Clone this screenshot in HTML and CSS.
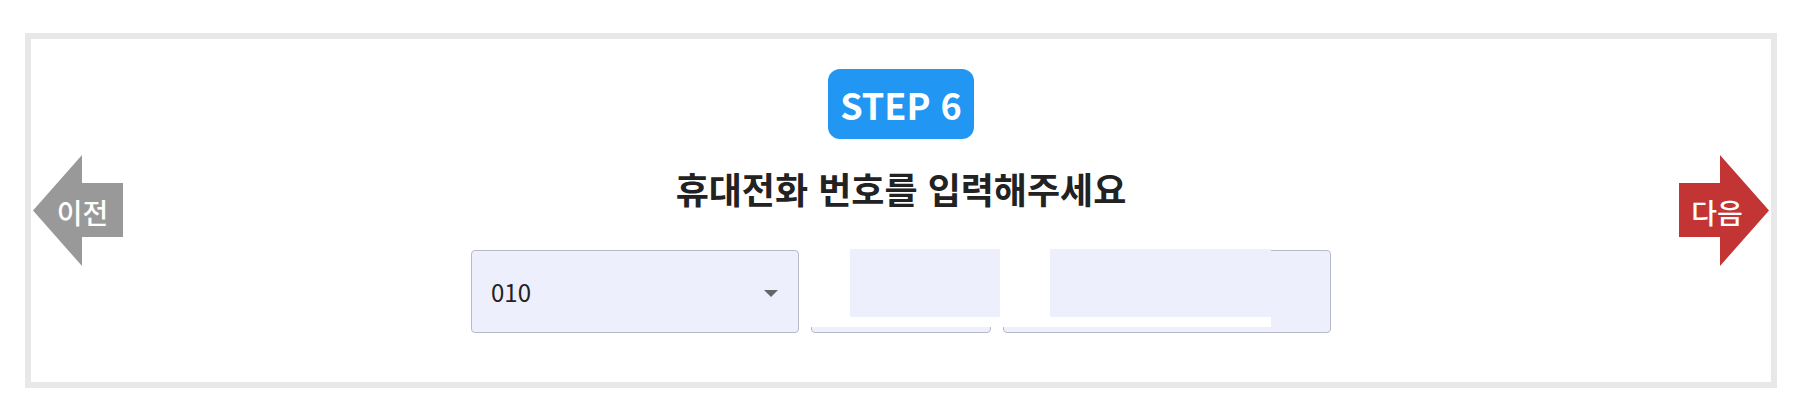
FILE: index.html
```html
<!DOCTYPE html>
<html lang="ko">
<head>
<meta charset="utf-8">
<title>STEP 6</title>
<link rel="stylesheet" href="styles.css">
</head>
<body>
<div class="frame">
  <a class="nav nav-prev">
    <svg class="nav-shape" width="90" height="111" viewBox="0 0 90 111"><polygon points="0,55.5 49,0 49,28 90,28 90,82 49,82 49,111" fill="#999999"/></svg>
    <span class="nav-label">이전</span>
  </a>
  <main class="content">
    <div class="badge">STEP 6</div>
    <h1 class="title">휴대전화 번호를 입력해주세요</h1>
    <div class="phone-row">
      <div class="field field-select">
        <span class="select-value">010</span>
        <span class="caret"></span>
      </div>
      <div class="field field-mid"></div>
      <div class="field field-last"></div>
      <div class="mask">
        <div class="mask-fill mask-fill-a"></div>
        <div class="mask-fill mask-fill-b"></div>
      </div>
    </div>
  </main>
  <a class="nav nav-next">
    <svg class="nav-shape" width="90" height="111" viewBox="0 0 90 111"><polygon points="90,55.5 41,0 41,28 0,28 0,82 41,82 41,111" fill="#c33434"/></svg>
    <span class="nav-label">다음</span>
  </a>
</div>
</body>
</html>
```
FILE: styles.css
```css
* { box-sizing: border-box; }
html, body { margin: 0; padding: 0; background: #ffffff; }
body {
  font-family: "Noto Sans CJK KR", "Noto Sans", sans-serif;
  color: #222222;
}
.frame {
  margin: 33px 0 0 25px;
  width: 1752px;
  height: 355px;
  border: 6px solid #e8e8e8;
  display: flex;
  align-items: center;
  padding: 0 2px;
}
.nav {
  display: grid;
  width: 90px;
  height: 111px;
  flex: none;
  cursor: pointer;
}
.nav-shape, .nav-label { grid-area: 1 / 1; }
.nav-shape { display: block; }
.nav-label {
  align-self: center;
  justify-self: center;
  color: #ffffff;
  font-size: 28px;
  font-weight: 500;
  line-height: 1;
  margin-top: 2px;
}
.nav-prev .nav-label { margin-left: 9px; }
.nav-next .nav-label { margin-right: 14px; }
.content {
  flex: 1;
  align-self: stretch;
  display: flex;
  flex-direction: column;
  align-items: center;
  padding-top: 30px;
}
.badge {
  background: #2196f3;
  color: #ffffff;
  font-size: 36px;
  font-weight: 700;
  line-height: 52px;
  padding: 9px 12px;
  border-radius: 12px;
}
.title {
  margin: 23px 0 0;
  font-size: 36px;
  font-weight: 700;
  line-height: 52px;
  color: #222222;
}
.phone-row {
  position: relative;
  margin-top: 36px;
  display: flex;
  gap: 12px;
}
.field {
  height: 83px;
  background: #edeffd;
  border: 1px solid #b9b9cc;
  border-radius: 4px;
}
.field-select {
  width: 328px;
  display: flex;
  align-items: center;
  justify-content: space-between;
  padding: 0 20px 0 19px;
}
.select-value {
  font-size: 24px;
  line-height: 1;
  color: #222222;
}
.caret {
  width: 0;
  height: 0;
  border-left: 7px solid transparent;
  border-right: 7px solid transparent;
  border-top: 7px solid #666666;
  margin-top: 4px;
}
.field-mid { width: 180px; }
.field-last { width: 328px; }
.mask {
  position: absolute;
  left: 334px;
  top: -1px;
  width: 466px;
  height: 78px;
  background: #ffffff;
}
.mask-fill {
  position: absolute;
  top: 0;
  height: 68px;
  background: #edeffd;
}
.mask-fill-a { left: 45px; width: 150px; }
.mask-fill-b { left: 245px; width: 221px; }
```
